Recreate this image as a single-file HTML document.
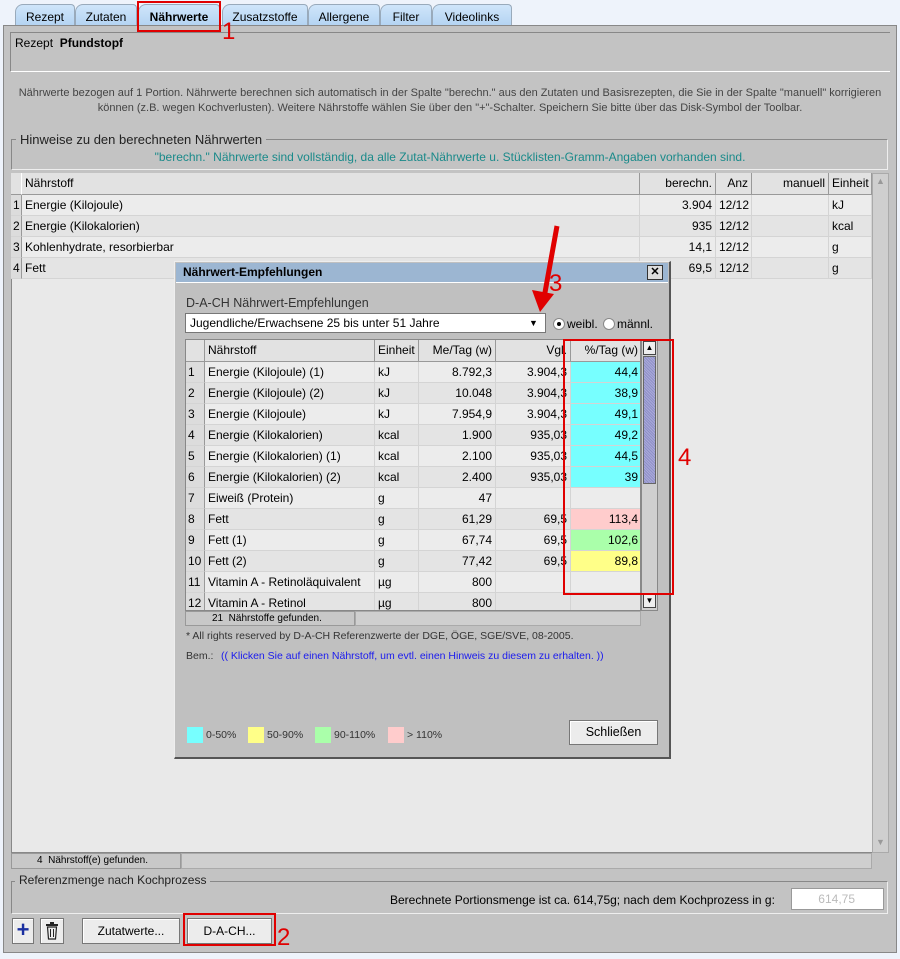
<!DOCTYPE html>
<html><head><meta charset="utf-8"><style>
*{margin:0;padding:0;box-sizing:border-box}
body{width:900px;height:959px;background:#eef3fb;font-family:"Liberation Sans",sans-serif;font-size:12px;color:#000;position:relative;overflow:hidden}
.a{position:absolute;white-space:nowrap}
.tab{position:absolute;top:4px;height:22px;background:linear-gradient(#cfe5fa,#b3d3f2);border:1px solid #9ab;border-bottom:none;border-radius:8px 4px 0 0;font-size:12px;padding-top:5px;text-align:center}
.cell{position:absolute;height:21px;line-height:20px;border-right:1px solid #d4d4d4;border-bottom:1px solid #d4d4d4;padding:0 3px;white-space:nowrap;overflow:hidden}
.hd{position:absolute;line-height:21px;border-right:1px solid #999;border-bottom:1px solid #999;background:#e2e2e2;padding:0 3px;white-space:nowrap}
.num{background:#dcdcdc;border-right:1px solid #999;padding:0 2px}
.r{text-align:right}
.btn{position:absolute;background:#ececec;border:1px solid #777;box-shadow:inset 1px 1px #fff;text-align:center;font-size:12px}
.red{position:absolute;border:2px solid #e00000;z-index:5}
.rn{position:absolute;color:#e00000;font-size:24px;font-family:"Liberation Sans",sans-serif;z-index:5}
</style></head><body>
<!-- tabs -->
<div class="tab" style="left:15px;width:60px">Rezept</div>
<div class="tab" style="left:75px;width:62px">Zutaten</div>
<div class="tab" style="left:138px;width:82px;font-weight:bold">Nährwerte</div>
<div class="tab" style="left:222px;width:86px">Zusatzstoffe</div>
<div class="tab" style="left:308px;width:72px">Allergene</div>
<div class="tab" style="left:380px;width:52px">Filter</div>
<div class="tab" style="left:432px;width:80px">Videolinks</div>
<div class="red" style="left:137px;top:1px;width:84px;height:31px"></div>
<div class="rn" style="left:222px;top:18px">1</div>
<!-- main panel -->
<div class="a" style="left:3px;top:25px;width:894px;height:928px;background:#c3c3c3;border:1px solid #888"></div>
<div class="a" style="left:10px;top:32px;width:880px;height:40px;border:1px solid #888;border-bottom:1px solid #fff;border-right:none"></div>
<div class="a" style="left:15px;top:36px">Rezept&nbsp; <b>Pfundstopf</b></div>
<div class="a" style="left:0;width:900px;top:86px;text-align:center;font-size:11px;color:#444;line-height:15px;white-space:normal">Nährwerte bezogen auf 1 Portion. Nährwerte berechnen sich automatisch in der Spalte "berechn." aus den Zutaten und Basisrezepten, die Sie in der Spalte "manuell" korrigieren<br>können (z.B. wegen Kochverlusten). Weitere Nährstoffe wählen Sie über den "+"-Schalter. Speichern Sie bitte über das Disk-Symbol der Toolbar.</div>
<div class="a" style="left:11px;top:139px;width:877px;height:31px;border:1px solid #888;border-right:1px solid #eee;border-bottom:1px solid #eee"></div>
<div class="a" style="left:16px;top:132px;background:#c3c3c3;padding:0 4px;font-size:13px;color:#222">Hinweise zu den berechneten Nährwerten</div>
<div class="a" style="left:0;width:900px;top:150px;text-align:center;color:#1a8a8a">"berechn." Nährwerte sind vollständig, da alle Zutat-Nährwerte u. Stücklisten-Gramm-Angaben vorhanden sind.</div>
<!-- main table -->
<div class="a" style="left:11px;top:173px;width:862px;height:680px;background:#e9e9e9;border:1px solid #888"></div>
<div class="hd" style="left:11px;top:173px;width:11px;height:22px;border-right:1px solid #fff"></div>
<div class="hd" style="left:22px;top:173px;width:618px;height:22px">Nährstoff</div>
<div class="hd r" style="left:640px;top:173px;width:76px;height:22px">berechn.</div>
<div class="hd r" style="left:716px;top:173px;width:36px;height:22px">Anz</div>
<div class="hd r" style="left:752px;top:173px;width:77px;height:22px">manuell</div>
<div class="hd" style="left:829px;top:173px;width:43px;height:22px">Einheit</div>
<div id="mt"></div>
<div class="a" style="left:872px;top:173px;width:17px;height:680px;background:#cfcfcf;border:1px solid #aaa"></div>
<div class="a" style="left:876px;top:176px;color:#999;font-size:9px">▲</div>
<div class="a" style="left:876px;top:837px;color:#999;font-size:9px">▼</div>
<div class="a" style="left:11px;top:853px;width:170px;height:16px;background:#c8c8c8;border:1px solid #999;font-size:10px;line-height:14px;padding-left:25px">4&nbsp; Nährstoff(e) gefunden.</div>
<div class="a" style="left:181px;top:853px;width:691px;height:16px;background:#cfcfcf;border:1px solid #aaa"></div>
<!-- Referenzmenge -->
<div class="a" style="left:11px;top:881px;width:877px;height:33px;border:1px solid #888;border-right:1px solid #eee;border-bottom:1px solid #eee"></div>
<div class="a" style="left:15px;top:873px;background:#c3c3c3;padding:0 4px;color:#222">Referenzmenge nach Kochprozess</div>
<div class="a" style="left:390px;top:893px">Berechnete Portionsmenge ist ca. 614,75g; nach dem Kochprozess in g:</div>
<div class="a" style="left:791px;top:888px;width:93px;height:22px;background:#fff;border:1px solid #999;color:#bbb;text-align:right;padding:3px 28px 0 0">614,75</div>
<!-- buttons -->
<div class="btn" style="left:12px;top:918px;width:22px;height:26px;color:#1a2fa0;font-size:22px;font-weight:bold;line-height:22px">+</div>
<div class="btn" style="left:40px;top:918px;width:24px;height:26px">
<svg width="14" height="18" viewBox="0 0 14 18" style="margin-top:3px"><rect x="1" y="2" width="12" height="2" fill="#222"/><rect x="5" y="0" width="4" height="2" fill="#222"/><path d="M2.5 5h9l-1 12h-7z" fill="none" stroke="#222" stroke-width="1.2"/><path d="M5.5 7v8M8.5 7v8" stroke="#222"/></svg></div>
<div class="btn" style="left:82px;top:918px;width:98px;height:26px;line-height:24px">Zutatwerte...</div>
<div class="btn" style="left:187px;top:918px;width:85px;height:26px;line-height:24px">D-A-CH...</div>
<div class="red" style="left:183px;top:913px;width:93px;height:33px"></div>
<div class="rn" style="left:277px;top:924px">2</div>
<!-- dialog -->
<div class="a" style="left:174px;top:261px;width:497px;height:498px;background:#c0c0c0;border:1px solid #eee;border-right:2px solid #555;border-bottom:2px solid #555"></div>
<div class="a" style="left:176px;top:263px;width:492px;height:20px;background:#9cb6d2;border-bottom:1px solid #fff"></div>
<div class="a" style="left:183px;top:265px;font-weight:bold;font-size:12px">Nährwert-Empfehlungen</div>
<div class="a" style="left:647px;top:265px;width:16px;height:15px;background:#ddd;border:1px solid #333;text-align:center;font-size:11px;line-height:13px;font-weight:bold">✕</div>
<div class="a" style="left:186px;top:296px;color:#333;font-size:12.5px">D-A-CH Nährwert-Empfehlungen</div>
<div class="a" style="left:185px;top:313px;width:361px;height:20px;background:#fff;border:1px solid #777;padding:2px 0 0 4px">Jugendliche/Erwachsene 25 bis unter 51 Jahre</div>
<div class="a" style="left:529px;top:318px;font-size:9px">▼</div>
<div class="a" style="left:553px;top:318px;width:12px;height:12px;border-radius:50%;background:#fff;border:1px solid #888"></div>
<div class="a" style="left:557px;top:322px;width:4px;height:4px;border-radius:50%;background:#000"></div>
<div class="a" style="left:567px;top:317px">weibl.</div>
<div class="a" style="left:603px;top:318px;width:12px;height:12px;border-radius:50%;background:#fff;border:1px solid #888"></div>
<div class="a" style="left:617px;top:317px">männl.</div>
<!-- inner table -->
<div class="a" style="left:185px;top:339px;width:456px;height:272px;background:#eaeaea;border:1px solid #888;overflow:hidden" id="it">
</div>
<div class="a" style="left:641px;top:339px;width:17px;height:272px;background:#cfcfcf;border:1px solid #888"></div>
<div class="a" style="left:643px;top:341px;width:13px;height:14px;background:#eee;border:1px solid #444;font-size:8px;text-align:center;line-height:12px">▲</div>
<div class="a" style="left:643px;top:356px;width:13px;height:128px;background:repeating-linear-gradient(45deg,#a9a9d8 0 1px,#8f90c8 1px 2px);border:1px solid #666"></div>
<div class="a" style="left:643px;top:594px;width:13px;height:14px;background:#eee;border:1px solid #444;font-size:8px;text-align:center;line-height:12px">▼</div>
<div class="a" style="left:185px;top:611px;width:170px;height:15px;background:#c8c8c8;border:1px solid #999;font-size:10px;line-height:13px;padding-left:26px">21&nbsp; Nährstoffe gefunden.</div>
<div class="a" style="left:355px;top:611px;width:286px;height:15px;background:#cfcfcf;border:1px solid #aaa"></div>
<div class="a" style="left:186px;top:630px;font-size:10.5px;color:#333">* All rights reserved by D-A-CH Referenzwerte der DGE, ÖGE, SGE/SVE, 08-2005.</div>
<div class="a" style="left:186px;top:650px;font-size:10.5px;color:#333">Bem.:</div>
<div class="a" style="left:221px;top:650px;font-size:10.5px;color:#1a1aee">(( Klicken Sie auf einen Nährstoff, um evtl. einen Hinweis zu diesem zu erhalten. ))</div>
<div class="a" style="left:187px;top:727px;width:16px;height:16px;background:#7ff"></div>
<div class="a" style="left:206px;top:729px;font-size:10.5px;color:#333">0-50%</div>
<div class="a" style="left:248px;top:727px;width:16px;height:16px;background:#ff8"></div>
<div class="a" style="left:267px;top:729px;font-size:10.5px;color:#333">50-90%</div>
<div class="a" style="left:315px;top:727px;width:16px;height:16px;background:#afa"></div>
<div class="a" style="left:334px;top:729px;font-size:10.5px;color:#333">90-110%</div>
<div class="a" style="left:388px;top:727px;width:16px;height:16px;background:#fcc"></div>
<div class="a" style="left:407px;top:729px;font-size:10.5px;color:#333">&gt; 110%</div>
<div class="btn" style="left:569px;top:720px;width:89px;height:25px;line-height:23px;font-size:12.5px">Schließen</div>
<!-- annotations -->
<div class="red" style="left:563px;top:339px;width:111px;height:256px"></div>
<div class="rn" style="left:678px;top:444px">4</div>
<svg class="a" style="left:520px;top:220px;z-index:5" width="60" height="100"><path d="M37 6 L24 78" stroke="#e00000" stroke-width="5" fill="none"/><path d="M12 70 L20 92 L34 74 Z" fill="#e00000"/></svg>
<div class="rn" style="left:549px;top:270px">3</div>
<script>
var m=[["1","Energie (Kilojoule)","3.904","12/12","kJ"],["2","Energie (Kilokalorien)","935","12/12","kcal"],["3","Kohlenhydrate, resorbierbar","14,1","12/12","g"],["4","Fett","69,5","12/12","g"]];
var h="";m.forEach(function(r,i){var t=195+i*21,b=i%2?"#e4e4e4":"#ececec";
h+='<div class="cell num" style="left:11px;top:'+t+'px;width:11px">'+r[0]+'</div>';
h+='<div class="cell" style="left:22px;top:'+t+'px;width:618px;background:'+b+'">'+r[1]+'</div>';
h+='<div class="cell r" style="left:640px;top:'+t+'px;width:76px;background:'+b+'">'+r[2]+'</div>';
h+='<div class="cell" style="left:716px;top:'+t+'px;width:36px;background:'+b+'">'+r[3]+'</div>';
h+='<div class="cell" style="left:752px;top:'+t+'px;width:77px;background:'+b+'"></div>';
h+='<div class="cell" style="left:829px;top:'+t+'px;width:43px;background:'+b+'">'+r[4]+'</div>';});
document.getElementById("mt").innerHTML=h;
var d=[["Energie (Kilojoule) (1)","kJ","8.792,3","3.904,3","44,4","#7ff"],["Energie (Kilojoule) (2)","kJ","10.048","3.904,3","38,9","#7ff"],["Energie (Kilojoule)","kJ","7.954,9","3.904,3","49,1","#7ff"],["Energie (Kilokalorien)","kcal","1.900","935,03","49,2","#7ff"],["Energie (Kilokalorien) (1)","kcal","2.100","935,03","44,5","#7ff"],["Energie (Kilokalorien) (2)","kcal","2.400","935,03","39","#7ff"],["Eiweiß (Protein)","g","47","","",""],["Fett","g","61,29","69,5","113,4","#fcc"],["Fett (1)","g","67,74","69,5","102,6","#afa"],["Fett (2)","g","77,42","69,5","89,8","#ff8"],["Vitamin A - Retinoläquivalent","µg","800","","",""],["Vitamin A - Retinol","µg","800","","",""]];
var g='<div class="hd" style="left:0;top:0;width:19px;height:22px"></div><div class="hd" style="left:19px;top:0;width:170px;height:22px">Nährstoff</div><div class="hd" style="left:189px;top:0;width:44px;height:22px">Einheit</div><div class="hd r" style="left:233px;top:0;width:77px;height:22px">Me/Tag (w)</div><div class="hd r" style="left:310px;top:0;width:75px;height:22px">Vgl.</div><div class="hd r" style="left:385px;top:0;width:71px;height:22px">%/Tag (w)</div>';
d.forEach(function(r,i){var t=22+i*21,b=i%2?"#e4e4e4":"#ececec";
g+='<div class="cell num" style="left:0;top:'+t+'px;width:19px">'+(i+1)+'</div>';
g+='<div class="cell" style="left:19px;top:'+t+'px;width:170px;background:'+b+'">'+r[0]+'</div>';
g+='<div class="cell" style="left:189px;top:'+t+'px;width:44px;background:'+b+'">'+r[1]+'</div>';
g+='<div class="cell r" style="left:233px;top:'+t+'px;width:77px;background:'+b+'">'+r[2]+'</div>';
g+='<div class="cell r" style="left:310px;top:'+t+'px;width:75px;background:'+b+'">'+r[3]+'</div>';
g+='<div class="cell r" style="left:385px;top:'+t+'px;width:71px;background:'+(r[5]||b)+'">'+r[4]+'</div>';});
document.getElementById("it").innerHTML=g;
</script>
</body></html>
